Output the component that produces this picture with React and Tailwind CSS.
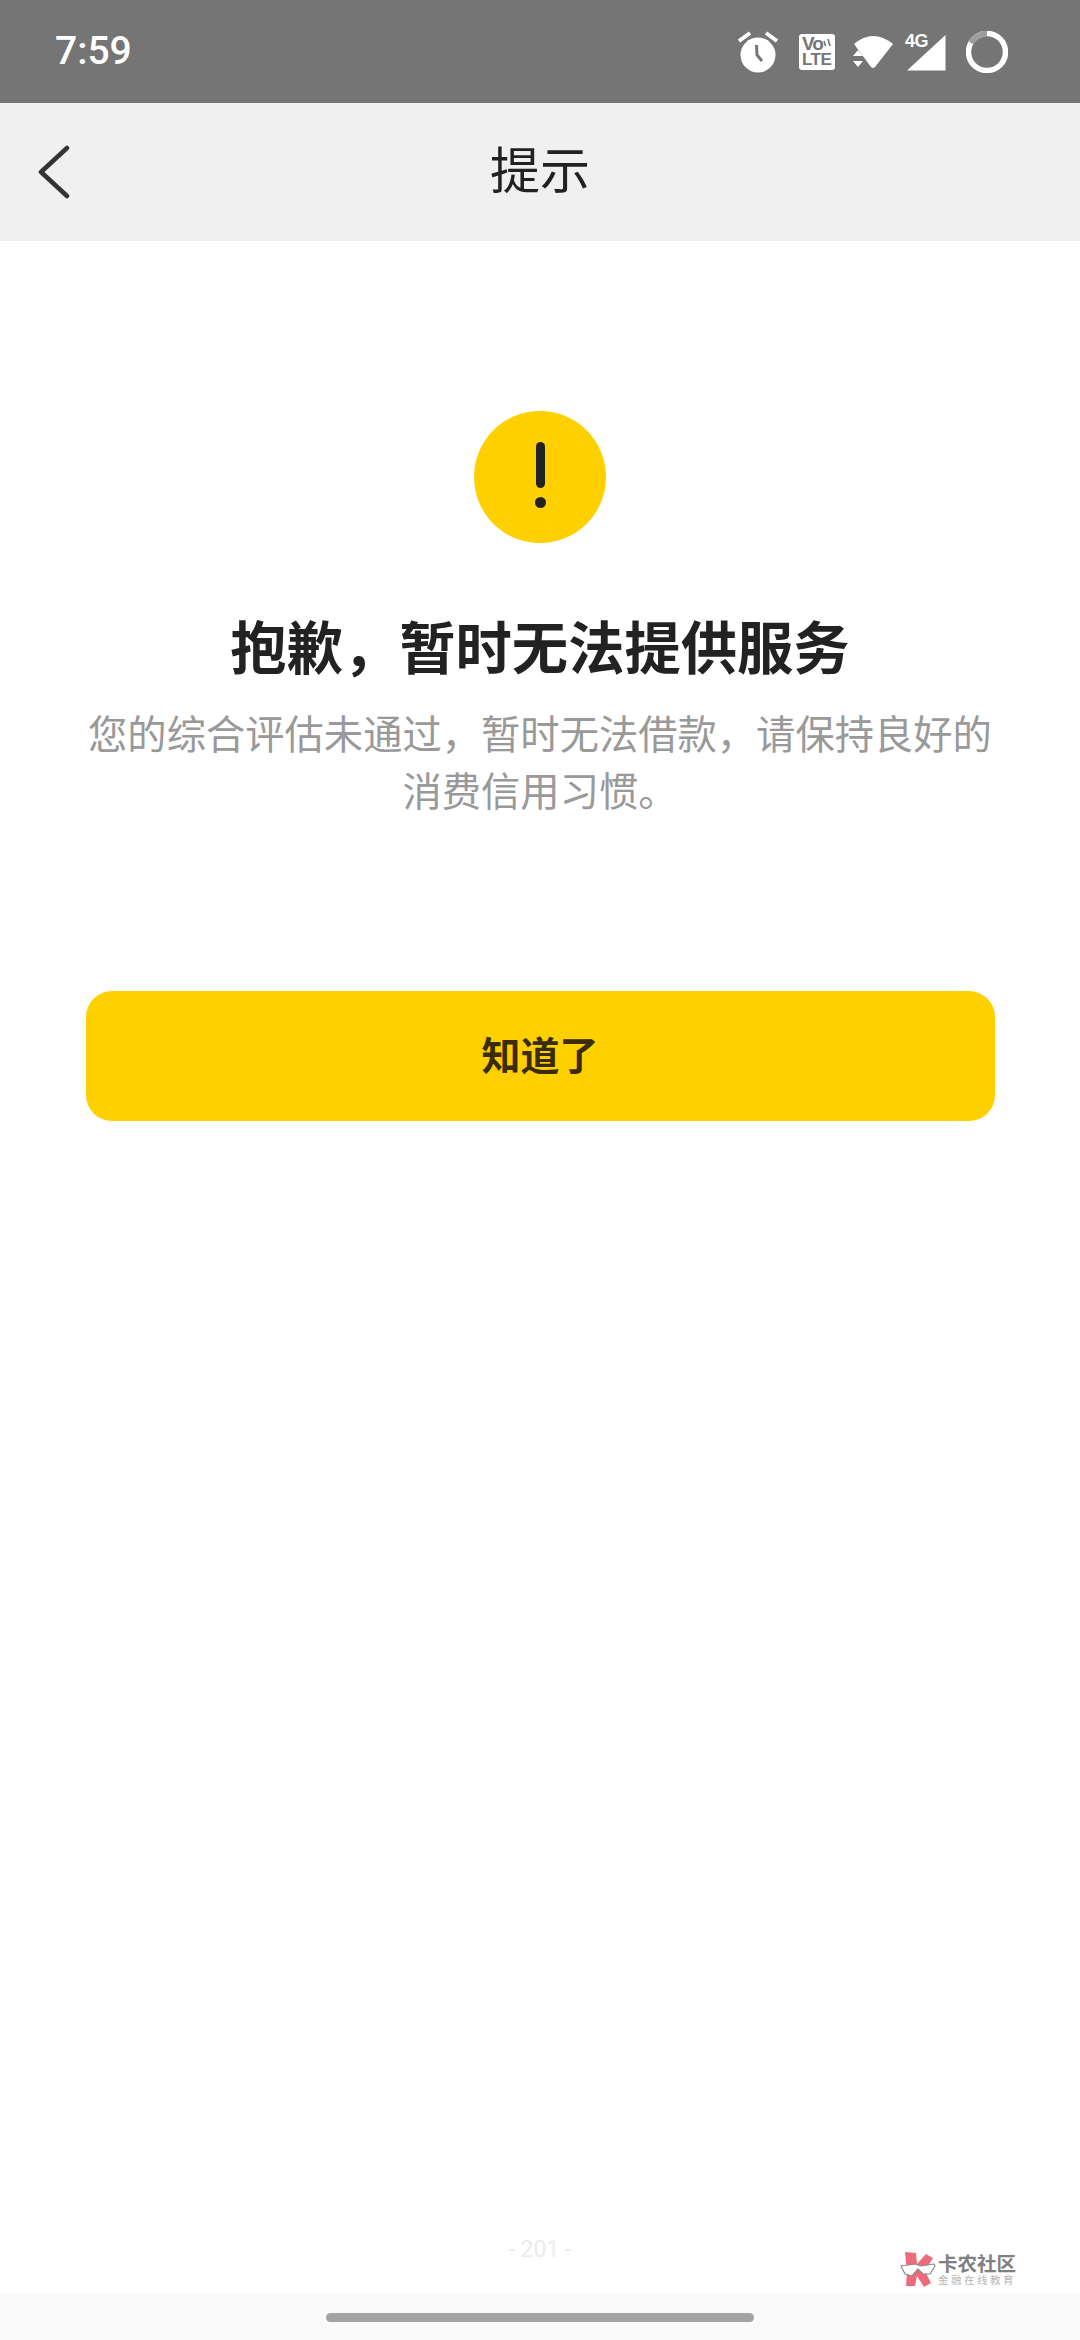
const fontStack = { fontFamily: '"Noto Sans CJK SC", "Noto Sans", sans-serif' };
const latin = { fontFamily: '"Liberation Sans", sans-serif' };

const StatusIcons = () => (
  <div className="flex items-center">
    <svg width="44" height="44" viewBox="0 0 44 44" className="mr-[19px]">
      <circle cx="22" cy="25" r="17.5" fill="#fff" />
      <path d="M3 11 L14 3 M41 11 L30 3" stroke="#fff" strokeWidth="4" />
      <path d="M20.5 15 L21 25 L26 31" stroke="#757575" strokeWidth="3" fill="none" />
    </svg>
    <div className="relative mr-[16px] flex h-[36px] w-[36px] flex-col justify-center rounded-[3px] bg-white pl-[3px] font-bold text-[#757575]" style={latin}>
      <span className="text-[19px] leading-[17px] tracking-[-1px]">Vo</span>
      <span className="text-[17px] leading-[16px] tracking-[-0.5px]">LTE</span>
      <svg width="9" height="10" viewBox="0 0 9 10" className="absolute right-[3px] top-[4px]">
        <path d="M1 3 L2.5 8 M5 1 L7 8" stroke="#757575" strokeWidth="1.6" />
      </svg>
    </div>
    <svg width="44" height="38" viewBox="0 0 44 38" className="mr-[10px]">
      <path d="M3 11 Q22 -5 42 11 L24 34 Q22 36 20 34 Z" fill="#fff" />
      <path d="M2 23 L7 17 L12 23 Z M2 28 L12 28 L7 34 Z" fill="#fff" />
    </svg>
    <div className="relative mr-[20px] h-[38px] w-[41px]">
      <svg width="41" height="38" viewBox="0 0 41 38" className="absolute left-0 top-0">
        <path d="M2 37.5 L40.5 2 L40.5 37.5 Z" fill="#fff" />
      </svg>
      <span className="absolute left-0 top-[-1px] text-[18px] font-bold leading-[18px] tracking-[-0.5px] text-white" style={latin}>4G</span>
    </div>
    <svg width="42" height="42" viewBox="0 0 42 42">
      <circle cx="21" cy="21" r="18.5" fill="none" stroke="#fff" strokeWidth="5.5" />
      <path d="M21 2.5 A18.5 18.5 0 0 0 5 12" fill="none" stroke="#9e9e9e" strokeWidth="5.5" />
    </svg>
  </div>
);

const CardWatermark = () => (
  <div className="flex items-center">
    <svg width="36" height="36" viewBox="0 0 36 36" className="mr-[2px]">
      <path d="M5 0 L16 1 L17 12 L26 2 L33 6 L25 19 L31 31 L24 35 L17 24 L15 34 L6 34 L7 20 Z" fill="#ef6b7a" />
      <path d="M1 14 L15 12 L21 14 L34 12 L35 14 L30 22 L23 22 L18 17 L12 24 L5 22 Z" fill="#fff" stroke="#8a8a8a" strokeWidth="1.2" strokeLinejoin="round" />
    </svg>
    <div className="flex flex-col items-start">
      <span className="text-[19.5px] font-bold leading-[20px] text-[#808080]">卡农社区</span>
      <span className="text-[10.5px] leading-[14px] tracking-[2.5px] text-[#b5b5b5]">金融在线教育</span>
    </div>
  </div>
);

export default function App() {
  return (
    <div className="flex h-[2340px] w-[1080px] flex-col bg-white" style={fontStack}>
      <div className="flex h-[103px] items-center justify-between bg-[#757575] pl-[55px] pr-[72px]">
        <span className="text-[39px] font-medium text-white" style={{ fontFamily: 'Roboto, sans-serif' }}>7:59</span>
        <StatusIcons />
      </div>

      <header className="relative flex h-[138px] items-center justify-center bg-[#f0f0f0] pb-[10px]">
        <svg width="34" height="56" viewBox="0 0 34 56" className="absolute left-[37px] top-[42px]">
          <path d="M30 3 L4 27 L30 51" fill="none" stroke="#333" strokeWidth="4.5" strokeLinecap="round" strokeLinejoin="round" />
        </svg>
        <h1 className="text-[50px] font-normal leading-none text-[#222]">提示</h1>
      </header>

      <main className="flex flex-1 flex-col items-center pt-[170px]">
        <div className="flex h-[132px] w-[132px] flex-col items-center justify-center rounded-full bg-[#ffd000] pb-[4px]">
          <div className="h-[46px] w-[9px] rounded-full bg-[#222]" />
          <div className="mt-[9px] h-[11px] w-[11px] rounded-full bg-[#222]" />
        </div>
        <h2 className="mt-[63px] text-[56.3px] font-bold leading-[78px] text-[#222]">抱歉，暂时无法提供服务</h2>
        <p className="mt-[19px] w-[910px] text-center text-[39.3px] leading-[57px] text-[#999]">
          您的综合评估未通过，暂时无法借款，请保持良好的消费信用习惯。
        </p>
        <button className="mt-[174px] h-[130px] w-[909px] rounded-[26px] bg-[#ffd000] pb-[5px] text-[39px] font-bold text-[#3a2c05]">
          知道了
        </button>
        <div className="mt-auto flex w-full flex-col">
          <div className="relative flex h-[54px] items-start justify-center">
            <span className="text-[23px] leading-[22px] text-[#ececec]" style={{ fontFamily: 'Roboto, sans-serif' }}>- 201 -</span>
            <div className="absolute right-[64px] top-[13px]">
              <CardWatermark />
            </div>
          </div>
          <div className="flex h-[47px] items-start justify-center bg-[#fafafa] pt-[20px]">
            <div className="h-[9px] w-[428px] rounded-full bg-[#a3a3a3]" />
          </div>
        </div>
      </main>
    </div>
  );
}
